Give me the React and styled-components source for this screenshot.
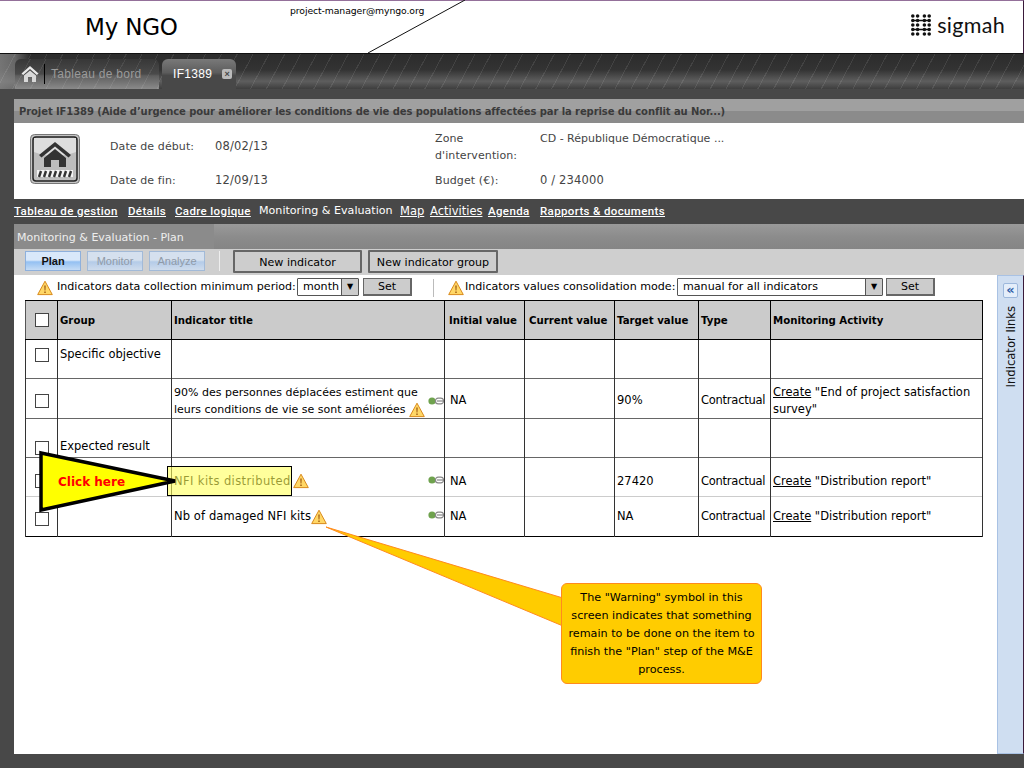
import React from "react";
import styled, { createGlobalStyle } from "styled-components";

const COMIC = `"DejaVu Sans", "Noto Sans", sans-serif`;
const UI = `"DejaVu Sans", "Liberation Sans", sans-serif`;

const Global = createGlobalStyle`
  html, body { margin: 0; padding: 0; background: #484848; overflow: hidden; }
  * { box-sizing: border-box; }
`;

const Page = styled.div`
  position: relative;
  width: 1024px;
  height: 768px;
  overflow: hidden;
  background: #484848;
  display: flex;
  flex-direction: column;
  font-family: ${COMIC};
`;

const Header = styled.header`
  height: 54px;
  flex: none;
  background: #fff;
  border-top: 1px solid #94709a;
  border-bottom: 1px solid #111;
  border-right: 1px solid #3a1a3a;
  display: flex;
  align-items: flex-start;
  padding-left: 85px;
`;
const OrgName = styled.div`
  font-size: 23px;
  line-height: 26px;
  margin-top: 13px;
  width: 205px;
  color: #000;
  letter-spacing: -0.2px;
`;
const Email = styled.div`
  font-size: 9.3px;
  line-height: 10px;
  margin-top: 5px;
  color: #000;
  letter-spacing: -0.1px;
`;
const Logo = styled.div`
  margin-left: auto;
  margin-top: 12px;
  margin-right: 18px;
  display: flex;
  align-items: center;
  gap: 6px;
  color: #111;
  font-family: Lato, sans-serif;
  font-size: 21.5px;
  line-height: 24px;
  letter-spacing: 0.3px;
`;

const TabBar = styled.nav`
  height: 35px;
  flex: none;
  display: flex;
  align-items: flex-end;
  padding-left: 15px;
  gap: 3px;
  background:
    repeating-linear-gradient(118deg, transparent 0 13px, rgba(255,255,255,.09) 13px 14px),
    linear-gradient(90deg, rgba(140,140,140,.75) 0, rgba(140,140,140,.6) 15px, transparent 30px),
    linear-gradient(180deg, #2c2c2c 0, #333 45%, #5e5e5e 78%, #3e3e3e 100%);
`;
const Tab = styled.div`
  height: 30px;
  width: ${p => p.$w}px;
  border-radius: 6px 6px 0 0;
  display: flex;
  align-items: center;
  font-family: "Liberation Sans", sans-serif;
  font-size: 12px;
  color: ${p => (p.$active ? "#fff" : "#9a9a9a")};
  background: ${p =>
    p.$active
      ? "linear-gradient(180deg, #797979 0, #5d5d5d 45%, #484848 55%, #484848 100%)"
      : "repeating-linear-gradient(118deg, transparent 0 13px, rgba(255,255,255,.08) 13px 14px), linear-gradient(180deg, #373737 0, #4a4a4a 50%, #5e5e5e 56%, #8a8a8a 100%)"};
`;
const HomeSlot = styled.span`
  width: 30px;
  height: 20px;
  margin-right: 6px;
  display: flex;
  align-items: center;
  justify-content: center;
  border-right: 1px solid #000;
`;
const TabLabel = styled.span`
  margin-left: ${p => p.$ml || 0}px;
  letter-spacing: 0.3px;
`;
const CloseIcon = styled.span`
  width: 10px;
  height: 10px;
  margin-left: 10px;
  border-radius: 2px;
  background: #bbb;
  color: #484848;
  font: bold 9px/10px "Liberation Sans", sans-serif;
  text-align: center;
`;

const Body = styled.div`
  flex: 1;
  min-height: 0;
  padding: 10px 0 14px 14px;
  display: flex;
  flex-direction: column;
`;
const TitleBar = styled.div`
  height: 24px;
  flex: none;
  padding: 1px 0 0 5px;
  display: flex;
  align-items: center;
  font: bold 10px/22px ${UI};
  letter-spacing: -0.09px;
  color: #3a3a3a;
  background: linear-gradient(180deg, #a0a0a0 0 50%, #8b8b8b 50% 100%);
  white-space: nowrap;
`;
const InfoPanel = styled.section`
  height: 76px;
  flex: none;
  background: #fff;
  color: #444;
  display: grid;
  grid-template-columns: 96px 105px 220px 105px 1fr;
  grid-template-rows: 34px 34px;
  padding-top: 7px;
  font: 11px/17px ${UI};
  letter-spacing: 0.1px;
`;
const IconCell = styled.div`
  grid-row: 1 / span 2;
  padding: 4px 0 0 16px;
`;
const InfoLabel = styled.div`
  align-self: center;
  margin-top: ${p => (p.$multi ? "0" : "-2px")};
`;
const InfoValue = styled.div`
  align-self: ${p => (p.$top ? "start" : "center")};
  margin-top: ${p => (p.$top ? "0" : "-1px")};
  font-size: ${p => (p.$top ? "11px" : "11.5px")};
  letter-spacing: ${p => (p.$top ? "0" : "0.15px")};
`;
const NavBar = styled.div`
  height: 25px;
  flex: none;
  background: #484848;
  display: flex;
  align-items: center;
  padding-bottom: 2px;
  color: #fff;
  white-space: nowrap;
`;
const NavLink = styled.a`
  width: ${p => p.$w}px;
  flex: none;
  font: ${p => (p.$comic ? `${p.$fs || 11.1}px ${COMIC}` : `500 11.5px Roboto, sans-serif`)};
  text-decoration: ${p => (p.$plain ? "none" : "underline")};
  color: #fff;
  letter-spacing: ${p => (p.$comic ? "0" : "0.36px")};
`;
const SubTitle = styled.div`
  height: 25px;
  flex: none;
  display: flex;
  background: linear-gradient(180deg, #9a9a9a 0, #8c8c8c 50%, #858585 100%);
`;
const SubTitleText = styled.div`
  width: 200px;
  padding-left: 3px;
  background: #8b8b8b;
  color: #eee;
  font-size: 11px;
  line-height: 28px;
`;
const Toolbar = styled.div`
  height: 26px;
  flex: none;
  background: #cfcfcf;
  display: flex;
  align-items: flex-start;
  padding: 2px 0 0 11px;
`;
const StepButton = styled.div`
  width: 56px;
  height: 20px;
  margin-right: 6px;
  border: 1px solid ${p => (p.$active ? "#8eb0dc" : "#a2bad8")};
  font: ${p => (p.$active ? "bold" : "normal")} 11px/19px "Liberation Sans", sans-serif;
  text-align: center;
  color: ${p => (p.$active ? "#111" : "#8f9aa8")};
  background: ${p =>
    p.$active
      ? "linear-gradient(180deg, #d9e8fa 0 45%, #94c0f2 55%, #c5dcf5 100%)"
      : "linear-gradient(180deg, #d5e0ee 0 45%, #b4cbe8 55%, #cfdcec 100%)"};
`;
const ToolSep = styled.div`
  width: 1px;
  height: 20px;
  background: #eee;
  margin: 0 13px 0 8px;
`;
const SketchButton = styled.div`
  width: ${p => p.$w}px;
  height: 23px;
  margin: -1px 6px 0 0;
  border: 2px solid #666;
  border-radius: 1px;
  background: #cdcdcd;
  color: #000;
  font-size: 11.1px;
  line-height: 21px;
  text-align: center;
  flex: none;
`;
const Workspace = styled.div`
  flex: 1;
  min-height: 0;
  display: flex;
`;
const Main = styled.main`
  flex: 1;
  background: #fff;
  min-width: 0;
`;
const FilterRow = styled.div`
  height: 25px;
  display: flex;
  align-items: center;
  padding-left: 23px;
  color: #000;
  font-size: 11.1px;
  white-space: nowrap;
`;
const FilterText = styled.span`
  margin-left: ${p => p.$ml || 0}px;
  width: ${p => p.$w}px;
  flex: none;
  margin-top: -2px;
`;
const Select = styled.div`
  width: ${p => p.$w}px;
  height: 18px;
  flex: none;
  border: 1px solid #555;
  border-radius: 1px;
  display: flex;
  justify-content: space-between;
  padding-left: 5px;
  margin-top: -2px;
  font-size: 11.1px;
  line-height: 16px;
  background: #fff;
`;
const SelectArrow = styled.span`
  width: 17px;
  border-left: 1px solid #555;
  background: #ccc;
  font: 8px/16px "DejaVu Sans", sans-serif;
  text-align: center;
`;
const SetButton = styled.div`
  width: 49px;
  height: 18px;
  margin-left: ${p => p.$ml}px;
  flex: none;
  border: 1px solid #666;
  border-right-width: 2px;
  border-bottom-width: 2px;
  background: #ccc;
  font-size: 11px;
  line-height: 16px;
  text-align: center;
  margin-top: -1px;
`;
const FilterSep = styled.div`
  width: 1px;
  height: 18px;
  background: #bbb;
  margin: 0 14px 0 21px;
`;
const Table = styled.table`
  width: 957px;
  margin-left: 11px;
  table-layout: fixed;
  border-collapse: collapse;
  font-size: 11.5px;
  color: #000;
  border: 1px solid #000;
`;
const Th = styled.th`
  height: 39px;
  background: #cbcbcb;
  border: 1px solid #000;
  border-left-color: ${p => (p.$soft ? "#555" : "#000")};
  padding: 0 2px 0 ${p => p.$pl || 2}px;
  text-align: left;
  font-size: 10.2px;
  font-weight: bold;
  white-space: nowrap;
`;
const Td = styled.td`
  height: ${p => p.$h}px;
  border-left: 1px solid #333;
  border-right: 1px solid #333;
  border-top: 1px solid ${p => (p.$lightTop ? "#ccc" : "#666")};
  padding: ${p => p.$pt || 0}px 2px ${p => p.$pb || 0}px ${p => p.$pl || 2}px;
  line-height: 17px;
  vertical-align: ${p => p.$va || "middle"};
`;
const Check = styled.div`
  width: 14px;
  height: 14px;
  margin: ${p => p.$m || "0 auto"};
  border: 1px solid #444;
  background: #fff;
`;
const TitleFlow = styled.div`
  display: flex;
  align-items: center;
`;
const TitleText = styled.span`
  font-size: ${p => p.$fs || 11.5}px;
  letter-spacing: ${p => p.$ls || 0}px;
  white-space: nowrap;
`;
const LinkIconSlot = styled.span`
  margin-left: auto;
  margin-right: -2px;
  margin-top: ${p => p.$mt || 0}px;
  display: flex;
  flex: none;
`;
const WarnInline = styled.span`
  display: inline-flex;
  vertical-align: middle;
  margin-left: ${p => p.$ml || 0}px;
`;
const CreateLink = styled.span`
  text-decoration: underline;
`;
const ActivityLine = styled.div`
  white-space: nowrap;
`;
const TypeText = styled.span`
  letter-spacing: -0.25px;
`;
const SidePanel = styled.aside`
  width: 27px;
  flex: none;
  background: #cfdef1;
  border: 1px solid #a9c2e4;
  border-right: 1px solid #3a1a3a;
  display: flex;
  flex-direction: column;
  align-items: center;
  padding-top: 7px;
`;
const Expand = styled.div`
  width: 15px;
  height: 15px;
  border: 1px solid #9db8dc;
  border-radius: 2px;
  background: #e4eefa;
  color: #2f5fa8;
  font: bold 13px/11px "DejaVu Sans", sans-serif;
  text-align: center;
`;
const SideLabel = styled.div`
  writing-mode: vertical-rl;
  transform: rotate(180deg);
  font-size: 11.6px;
  line-height: 14px;
  margin-top: 8px;
  color: #111;
  white-space: nowrap;
`;
const OverlaySvg = styled.svg`
  position: absolute;
  inset: 0;
  width: 1024px;
  height: 768px;
  pointer-events: none;
`;
const Highlight = styled.div`
  position: absolute;
  left: 167px;
  top: 466px;
  width: 125px;
  height: 30px;
  border: 1px solid #000;
  background: rgba(255, 255, 90, 0.6);
`;
const ClickHere = styled.div`
  position: absolute;
  left: 58px;
  top: 474px;
  color: #f00;
  font-weight: bold;
  font-size: 12px;
  line-height: 16px;
`;
const Callout = styled.div`
  position: absolute;
  left: 561px;
  top: 583px;
  width: 201px;
  height: 101px;
  padding-top: 5px;
  border: 1px solid #ff8a1e;
  border-radius: 6px;
  background: #ffcc00;
  color: #000;
  text-align: center;
  font-size: 11.2px;
  line-height: 18px;
  white-space: nowrap;
`;

const Warn = ({ s = 16 }) => (
  <svg width={s} height={s} viewBox="0 0 16 16">
    <path d="M8 1.2 15.3 14.6H.7Z" fill="#ffd766" stroke="#d98a1c" strokeWidth="1" strokeLinejoin="round" />
    <path d="M7.2 5.5h1.6l-.3 5h-1zM7.2 11.4h1.6v1.5H7.2z" fill="#a8661a" />
  </svg>
);
const LinkIcon = () => (
  <svg width="16" height="8" viewBox="0 0 16 8">
    <circle cx="4" cy="4" r="3.6" fill="#6fa24e" />
    <rect x="7.5" y="1.2" width="8" height="5.6" rx="2.6" fill="none" stroke="#888" strokeWidth="1.2" />
    <path d="M9 4h6" stroke="#888" strokeWidth="1.2" />
  </svg>
);
const SigmahMark = () => {
  const xs = [1.8, 6.6, 13.4, 18.2];
  const ys = [2, 6.5, 11, 15.5, 20];
  return (
    <svg width="20" height="22" viewBox="0 0 20 22">
      <path d="M1 6.5H19M1 15.5H19" stroke="#111" strokeWidth="1.4" />
      {xs.flatMap(x => ys.map(y => <circle key={x + "-" + y} cx={x} cy={y} r="1.8" fill="#111" />))}
    </svg>
  );
};
const HomeTab = () => (
  <svg width="18" height="18" viewBox="0 0 18 18">
    <path d="M9 1 17.5 8.5 15.8 10 9 4 2.2 10 .5 8.5Z" fill="#e8e8e8" />
    <path d="M3 10.5 9 5.5l6 5V17h-4v-5H7v5H3Z" fill="#d8d8d8" />
  </svg>
);
const ProjectIcon = () => (
  <svg width="50" height="50" viewBox="0 0 50 50">
    <rect x=".5" y=".5" width="49" height="49" rx="4" fill="#c4c4c4" stroke="#777" />
    <rect x="3" y="3" width="44" height="44" rx="3" fill="#bdbdbd" stroke="#222" strokeWidth="1.5" />
    <path d="M4 4h42v14Q25 26 4 18Z" fill="#dedede" />
    <path d="M25 8 41 21 38.5 23.5 25 12.5 11.5 23.5 9 21Z" fill="#333" />
    <path d="M14 24 25 15 36 24V33H29V26H21V33H14Z" fill="#333" />
    <rect x="7" y="36" width="36" height="7" fill="#f4f4f4" />
    {[9, 14, 19, 24, 29, 34, 39].map(x => (
      <path key={x} d={`M${x + 2} 37 ${x} 43`} stroke="#333" strokeWidth="2.4" />
    ))}
  </svg>
);

const rows = [
  { h: 39, group: "Specific objective", va: "top", pt: 6, checkM: "2px auto 0" },
  {
    h: 40, pt: 4, fs: 11,
    title: (<>90% des personnes déplacées estiment que<br />leurs conditions de vie se sont améliorées <WarnInline><Warn /></WarnInline></>),
    link: true, init: "NA", target: "90%", type: "Contractual",
    activity: (<><ActivityLine><CreateLink>Create</CreateLink> "End of project satisfaction</ActivityLine><ActivityLine>survey"</ActivityLine></>),
  },
  { h: 39, group: "Expected result", va: "bottom", pb: 2 },
  {
    h: 39, pt: 8, ls: 0.4,
    title: (<>NFI kits distributed<WarnInline $ml={2}><Warn /></WarnInline></>),
    link: true, linkMt: -2, init: "NA", target: "27420", type: "Contractual",
    activity: (<><CreateLink>Create</CreateLink> "Distribution report"</>),
  },
  {
    h: 40, ls: 0.1, checkM: "5px auto 0",
    title: (<>Nb of damaged NFI kits<WarnInline><Warn /></WarnInline></>),
    link: true, linkMt: -4, init: "NA", target: "NA", type: "Contractual",
    activity: (<><CreateLink>Create</CreateLink> "Distribution report"</>),
  },
];
const widths = [32, 114, 273, 80, 90, 84, 72, 212];
const heads = [
  { t: "Group", soft: true, pl: 2 },
  { t: "Indicator title", pl: 2 },
  { t: "Initial value", pl: 4 },
  { t: "Current value", pl: 4 },
  { t: "Target value", pl: 2 },
  { t: "Type", pl: 2 },
  { t: "Monitoring Activity", pl: 2 },
];

export default function App() {
  return (
    <Page>
      <Global />
      <Header>
        <OrgName>My NGO</OrgName>
        <Email>project-manager@myngo.org</Email>
        <Logo><SigmahMark />sigmah</Logo>
      </Header>
      <TabBar>
        <Tab $w={144}>
          <HomeSlot><HomeTab /></HomeSlot>
          <TabLabel>Tableau de bord</TabLabel>
        </Tab>
        <Tab $w={74} $active>
          <TabLabel $ml={11}>IF1389</TabLabel>
          <CloseIcon>×</CloseIcon>
        </Tab>
      </TabBar>
      <Body>
        <TitleBar>Projet IF1389 (Aide d’urgence pour améliorer les conditions de vie des populations affectées par la reprise du conflit au Nor...)</TitleBar>
        <InfoPanel>
          <IconCell><ProjectIcon /></IconCell>
          <InfoLabel>Date de début:</InfoLabel>
          <InfoValue>08/02/13</InfoValue>
          <InfoLabel $multi>Zone<br />d'intervention:</InfoLabel>
          <InfoValue $top>CD - République Démocratique ...</InfoValue>
          <InfoLabel>Date de fin:</InfoLabel>
          <InfoValue>12/09/13</InfoValue>
          <InfoLabel>Budget (€):</InfoLabel>
          <InfoValue>0 / 234000</InfoValue>
        </InfoPanel>
        <NavBar>
          <NavLink $w={114}>Tableau de gestion</NavLink>
          <NavLink $w={47}>Détails</NavLink>
          <NavLink $w={84}>Cadre logique</NavLink>
          <NavLink $w={141} $comic $plain>Monitoring &amp; Evaluation</NavLink>
          <NavLink $w={30} $comic $fs={11.5}>Map</NavLink>
          <NavLink $w={58} $comic $fs={11.5}>Activities</NavLink>
          <NavLink $w={52}>Agenda</NavLink>
          <NavLink $w={140}>Rapports &amp; documents</NavLink>
        </NavBar>
        <SubTitle><SubTitleText>Monitoring &amp; Evaluation - Plan</SubTitleText></SubTitle>
        <Toolbar>
          <StepButton $active>Plan</StepButton>
          <StepButton>Monitor</StepButton>
          <StepButton>Analyze</StepButton>
          <ToolSep />
          <SketchButton $w={129}>New indicator</SketchButton>
          <SketchButton $w={130}>New indicator group</SketchButton>
        </Toolbar>
        <Workspace>
          <Main>
            <FilterRow>
              <Warn />
              <FilterText $ml={4} $w={240}>Indicators data collection minimum period:</FilterText>
              <Select $w={62}>month<SelectArrow>▼</SelectArrow></Select>
              <SetButton $ml={4}>Set</SetButton>
              <FilterSep />
              <Warn />
              <FilterText $ml={1} $w={212}>Indicators values consolidation mode:</FilterText>
              <Select $w={206}>manual for all indicators<SelectArrow>▼</SelectArrow></Select>
              <SetButton $ml={3}>Set</SetButton>
            </FilterRow>
            <Table>
              <colgroup>{widths.map((w, i) => <col key={i} style={{ width: w }} />)}</colgroup>
              <thead>
                <tr>
                  <Th $soft><Check /></Th>
                  {heads.map(h => <Th key={h.t} $soft={h.soft} $pl={h.pl}>{h.t}</Th>)}
                </tr>
              </thead>
              <tbody>
                {rows.map((r, i) => {
                  const light = i === 4;
                  return (
                    <tr key={i}>
                      <Td $h={r.h} $va={r.va} $pt={r.pt} $pb={r.pb} $lightTop={light}><Check $m={r.checkM} /></Td>
                      <Td $h={r.h} $va={r.va} $pt={r.pt} $pb={r.pb} $lightTop={light}>{r.group}</Td>
                      <Td $h={r.h} $va={r.va} $pt={r.pt} $pb={r.pb} $lightTop={light}>
                        <TitleFlow>
                          <TitleText $fs={r.fs} $ls={r.ls}>{r.title}</TitleText>
                          {r.link && <LinkIconSlot $mt={r.linkMt}><LinkIcon /></LinkIconSlot>}
                        </TitleFlow>
                      </Td>
                      <Td $h={r.h} $pt={r.pt} $pl={5} $lightTop={light}>{r.init}</Td>
                      <Td $h={r.h} $pt={r.pt} $lightTop={light} />
                      <Td $h={r.h} $pt={r.pt} $lightTop={light}>{r.target}</Td>
                      <Td $h={r.h} $pt={r.pt} $lightTop={light}><TypeText>{r.type}</TypeText></Td>
                      <Td $h={r.h} $pt={r.pt} $lightTop={light}>{r.activity}</Td>
                    </tr>
                  );
                })}
              </tbody>
            </Table>
          </Main>
          <SidePanel>
            <Expand>«</Expand>
            <SideLabel>Indicator links</SideLabel>
          </SidePanel>
        </Workspace>
      </Body>
      <OverlaySvg viewBox="0 0 1024 768">
        <path d="M465 0 368 53" stroke="#111" strokeWidth="1" fill="none" />
      </OverlaySvg>
      <Highlight />
      <OverlaySvg viewBox="0 0 1024 768">
        <path d="M41 453 175 481 41 510Z" fill="#ffff00" stroke="#000" strokeWidth="3.5" strokeLinejoin="miter" />
        <path d="M326 527 563 598V626Z" fill="#ffcc00" stroke="#ff8a1e" strokeWidth="1" />
      </OverlaySvg>
      <ClickHere>Click here</ClickHere>
      <Callout>
        The "Warning" symbol in this<br />
        screen indicates that something<br />
        remain to be done on the item to<br />
        finish the "Plan" step of the M&amp;E<br />
        process.
      </Callout>
    </Page>
  );
}
